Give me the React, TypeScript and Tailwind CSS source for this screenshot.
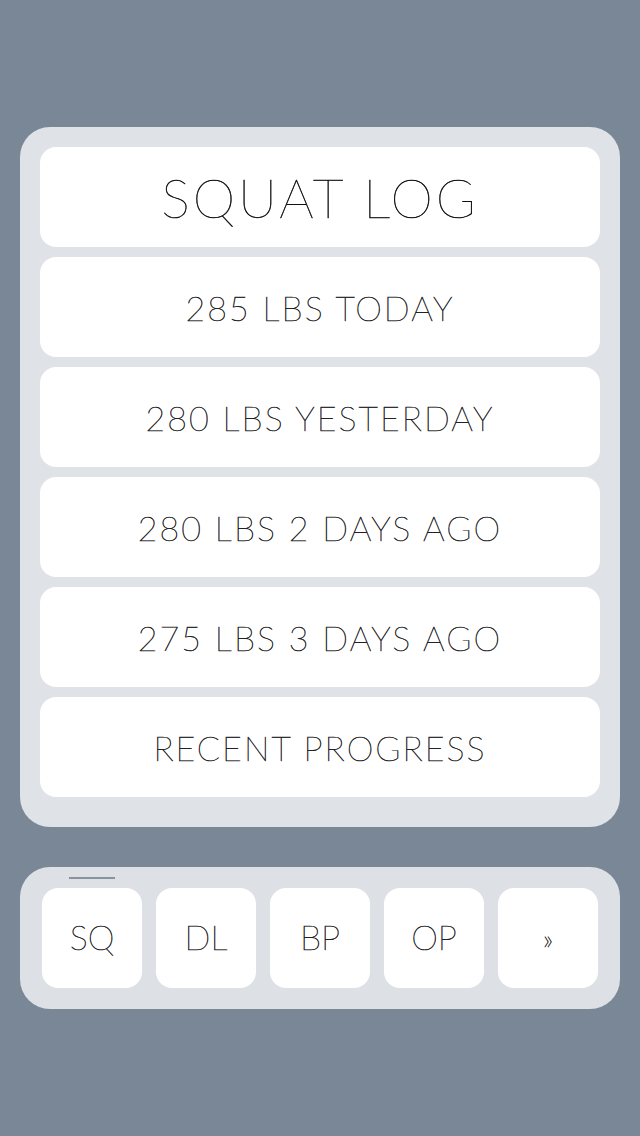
import React from 'react';

const LOG = [
  '285 LBS TODAY',
  '280 LBS YESTERDAY',
  '280 LBS 2 DAYS AGO',
  '275 LBS 3 DAYS AGO',
  'RECENT PROGRESS',
];

const LIFTS = ['SQ', 'DL', 'BP', 'OP', '»'];

export default function App() {
  return (
    <div
      className="min-h-[1136px] w-[640px] bg-[#798796] px-5 pt-[127px] antialiased"
      style={{ fontFamily: 'Lato, "Open Sans", sans-serif' }}
    >
      {/* Log card */}
      <div className="flex flex-col gap-[10px] rounded-[30px] bg-[#dfe2e6] px-5 pt-5 pb-[30px]">
        <div className="flex h-[100px] items-center justify-center rounded-2xl bg-white">
          <span className="text-[54px] font-thin tracking-[0.055em] text-black [-webkit-text-stroke:0.5px_#111]">
            SQUAT LOG
          </span>
        </div>
        {LOG.map((t) => (
          <div key={t} className="flex h-[100px] items-center justify-center rounded-2xl bg-white">
            <span className="text-[34px] font-thin tracking-[0.06em] text-black [-webkit-text-stroke:0.5px_#222]">
              {t}
            </span>
          </div>
        ))}
      </div>

      {/* Lift selector */}
      <div className="relative mt-10 flex gap-[14px] rounded-[30px] bg-[#dde1e5] px-[22px] py-[21px]">
        <div className="absolute left-[49px] top-[10px] h-[2px] w-[46px] bg-[#8a929b]" />
        {LIFTS.map((l) => (
          <div key={l} className="flex h-[100px] w-[100px] items-center justify-center rounded-2xl bg-white">
            <span
              className={
                l === '»'
                  ? 'text-[28px] font-thin text-black [-webkit-text-stroke:0.5px_#222]'
                  : 'mt-[-3px] text-[34px] font-thin text-black [-webkit-text-stroke:0.5px_#222]'
              }
            >
              {l}
            </span>
          </div>
        ))}
      </div>
    </div>
  );
}
